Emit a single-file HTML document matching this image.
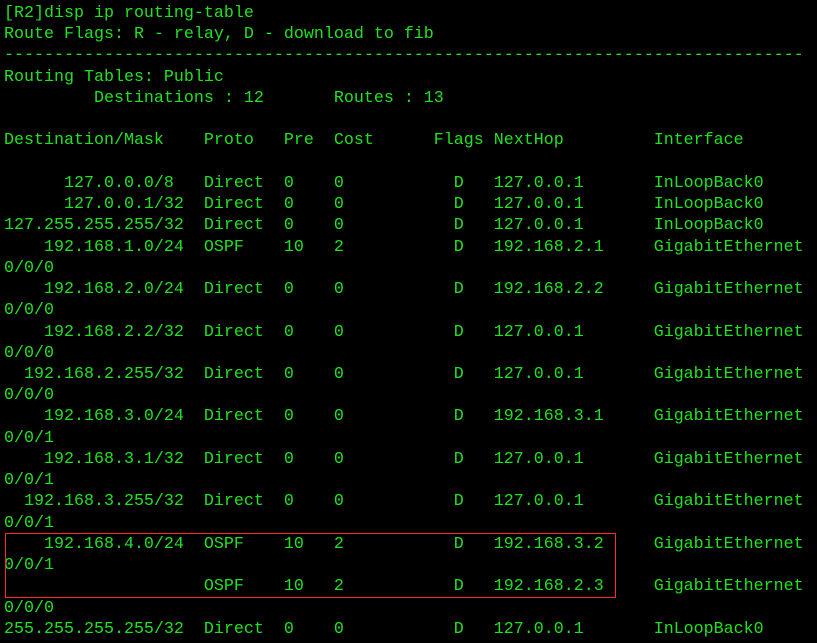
<!DOCTYPE html>
<html><head><style>
html,body{margin:0;padding:0;background:#000;width:817px;height:643px;overflow:hidden;}
pre{position:absolute;left:4px;top:3px;margin:0;font-family:"Liberation Mono",monospace;font-size:16.67px;line-height:21.24px;color:#22e022;}
.box{position:absolute;left:5px;top:533px;width:609px;height:63px;border:1px solid #ff2a2a;}
</style></head><body>
<pre>[R2]disp ip routing-table
Route Flags: R - relay, D - download to fib
--------------------------------------------------------------------------------
Routing Tables: Public
         Destinations : 12       Routes : 13

Destination/Mask    Proto   Pre  Cost      Flags NextHop         Interface

      127.0.0.0/8   Direct  0    0           D   127.0.0.1       InLoopBack0
      127.0.0.1/32  Direct  0    0           D   127.0.0.1       InLoopBack0
127.255.255.255/32  Direct  0    0           D   127.0.0.1       InLoopBack0
    192.168.1.0/24  OSPF    10   2           D   192.168.2.1     GigabitEthernet
0/0/0
    192.168.2.0/24  Direct  0    0           D   192.168.2.2     GigabitEthernet
0/0/0
    192.168.2.2/32  Direct  0    0           D   127.0.0.1       GigabitEthernet
0/0/0
  192.168.2.255/32  Direct  0    0           D   127.0.0.1       GigabitEthernet
0/0/0
    192.168.3.0/24  Direct  0    0           D   192.168.3.1     GigabitEthernet
0/0/1
    192.168.3.1/32  Direct  0    0           D   127.0.0.1       GigabitEthernet
0/0/1
  192.168.3.255/32  Direct  0    0           D   127.0.0.1       GigabitEthernet
0/0/1
    192.168.4.0/24  OSPF    10   2           D   192.168.3.2     GigabitEthernet
0/0/1
                    OSPF    10   2           D   192.168.2.3     GigabitEthernet
0/0/0
255.255.255.255/32  Direct  0    0           D   127.0.0.1       InLoopBack0
</pre>
<div class="box"></div>
</body></html>
